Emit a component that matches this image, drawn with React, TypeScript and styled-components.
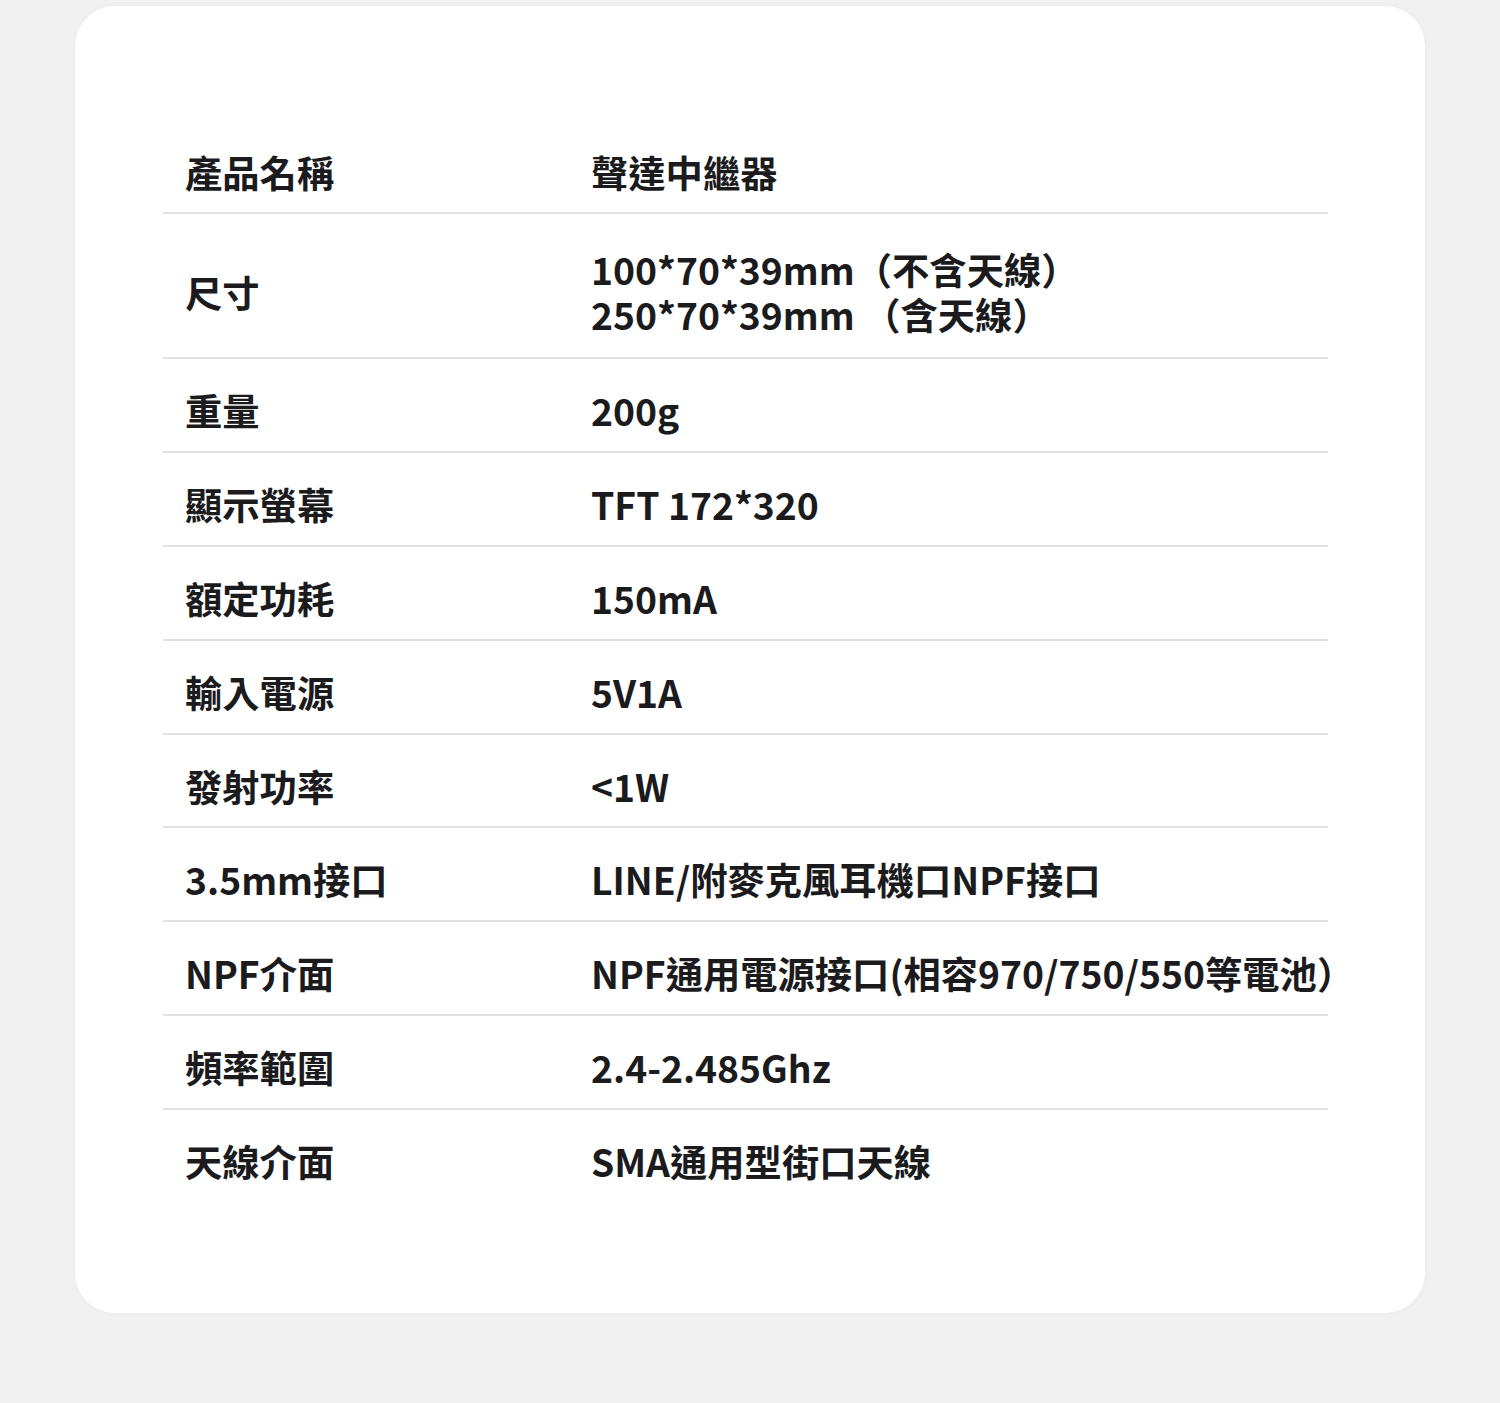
import React from "react";
import styled, { createGlobalStyle } from "styled-components";

const Global = createGlobalStyle`
  html, body { margin: 0; padding: 0; background: #f1f1f1; }
  body { font-family: "Noto Sans CJK TC", "Noto Sans", sans-serif; }
`;

const Page = styled.div`
  width: 1500px;
  height: 1403px;
  padding: 6px 75px 0;
  box-sizing: border-box;
  background: #f1f1f1;
`;

const Card = styled.div`
  width: 1350px;
  height: 1307px;
  box-sizing: border-box;
  background: #ffffff;
  border-radius: 40px;
  box-shadow: 0 0 6px rgba(0, 0, 0, 0.03);
  padding: 114.7px 97px 0 88px;
`;

const Table = styled.div`
  display: flex;
  flex-direction: column;
`;

const Row = styled.div<{ $last?: boolean; $multi?: boolean }>`
  display: grid;
  grid-template-columns: 406px 1fr;
  align-items: center;
  padding: ${(p) => (p.$multi ? "33px 0 20px 22px" : "29px 0 17.8px 22px")};
  border-bottom: ${(p) => (p.$last ? "none" : "2px solid #e1e1e1")};
`;

const Label = styled.div`
  font-family: "Noto Sans CJK TC", "Noto Sans", sans-serif;
  font-weight: 700;
  font-size: 37.3px;
  line-height: 45px;
  color: #1b1b1d;
  white-space: nowrap;
`;

const Value = styled.div`
  font-family: "Noto Sans CJK TC", "Noto Sans", sans-serif;
  font-weight: 700;
  font-size: 37.3px;
  line-height: 45px;
  color: #1b1b1d;
  white-space: nowrap;
`;

const rows: { label: string; value: string[] }[] = [
  { label: "產品名稱", value: ["聲達中繼器"] },
  { label: "尺寸", value: ["100*70*39mm（不含天線）", "250*70*39mm （含天線）"] },
  { label: "重量", value: ["200g"] },
  { label: "顯示螢幕", value: ["TFT 172*320"] },
  { label: "額定功耗", value: ["150mA"] },
  { label: "輸入電源", value: ["5V1A"] },
  { label: "發射功率", value: ["<1W"] },
  { label: "3.5mm接口", value: ["LINE/附麥克風耳機口NPF接口"] },
  { label: "NPF介面", value: ["NPF通用電源接口(相容970/750/550等電池）"] },
  { label: "頻率範圍", value: ["2.4-2.485Ghz"] },
  { label: "天線介面", value: ["SMA通用型街口天線"] },
];

export default function App() {
  return (
    <Page>
      <Global />
      <Card>
        <Table>
          {rows.map((r, i) => (
            <Row key={r.label} $last={i === rows.length - 1} $multi={r.value.length > 1}>
              <Label>{r.label}</Label>
              <Value>
                {r.value.map((v) => (
                  <div key={v}>{v}</div>
                ))}
              </Value>
            </Row>
          ))}
        </Table>
      </Card>
    </Page>
  );
}
